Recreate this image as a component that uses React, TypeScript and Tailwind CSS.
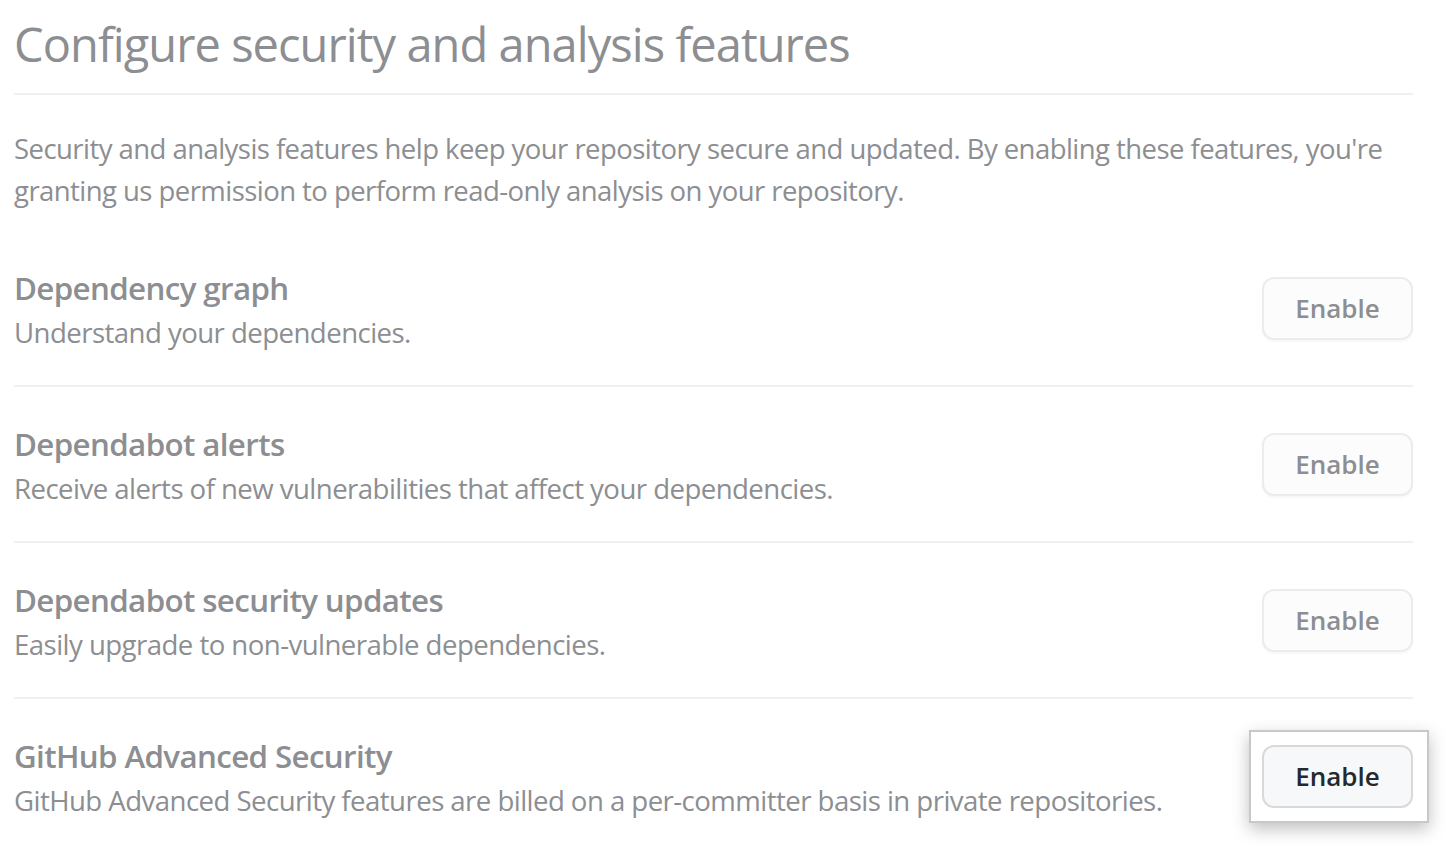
import React from "react";

const rows = [
  { title: "Dependency graph", desc: "Understand your dependencies." },
  { title: "Dependabot alerts", desc: "Receive alerts of new vulnerabilities that affect your dependencies." },
  { title: "Dependabot security updates", desc: "Easily upgrade to non-vulnerable dependencies." },
  {
    title: "GitHub Advanced Security",
    desc: "GitHub Advanced Security features are billed on a per-committer basis in private repositories.",
    highlight: true,
  },
];

export default function App() {
  return (
    <div
      className="min-h-[851px] w-[1449px] bg-white text-[#8c8e92]"
      style={{ fontFamily: '"Open Sans", "Noto Sans", sans-serif' }}
    >
      <div className="w-[1413px] pl-[14px]">
        <div className="border-b-2 border-[#f0f0f0] pt-[14px] pb-[19px]">
          <h1 className="text-[47px] leading-[60px] font-normal tracking-[-0.02em]">
            Configure security and analysis features
          </h1>
        </div>
        <p className="mt-[33px] mb-[19px] text-[27.5px] leading-[42px] tracking-[-0.02em]">
          Security and analysis features help keep your repository secure and updated. By enabling these features, you're
          <br />
          granting us permission to perform read-only analysis on your repository.
        </p>
        <div>
          {rows.map((r, i) => (
            <div
              key={r.title}
              className={
                "flex items-center justify-between pt-[34px] pb-[32px] " +
                (i < rows.length - 1 ? "border-b-2 border-[#f0f0f0]" : "")
              }
            >
              <div>
                <div className="text-[31.3px] leading-[46px] font-semibold tracking-[-0.02em]">{r.title}</div>
                <div className="text-[27.6px] leading-[42px] tracking-[-0.02em]">{r.desc}</div>
              </div>
              <div className="relative mt-[-1px]">
                {r.highlight && (
                  <div className="absolute top-[-15px] bottom-[-15px] left-[-13px] right-[-16px] border-2 border-[#c8c8c8] bg-white shadow-[0_6px_16px_rgba(0,0,0,0.25)]" />
                )}
                <button
                  className={
                    "relative flex h-[63px] w-[151px] items-center justify-center rounded-[12px] border-2 text-[26px] font-semibold " +
                    (r.highlight
                      ? "border-[#d8d9db] bg-[#f7f8fa] text-[#24292e]"
                      : "border-[#ececec] bg-[#fcfcfd] text-[#8c8e92] shadow-[0_2px_2px_rgba(0,0,0,0.03)]")
                  }
                >
                  Enable
                </button>
              </div>
            </div>
          ))}
        </div>
      </div>
    </div>
  );
}
